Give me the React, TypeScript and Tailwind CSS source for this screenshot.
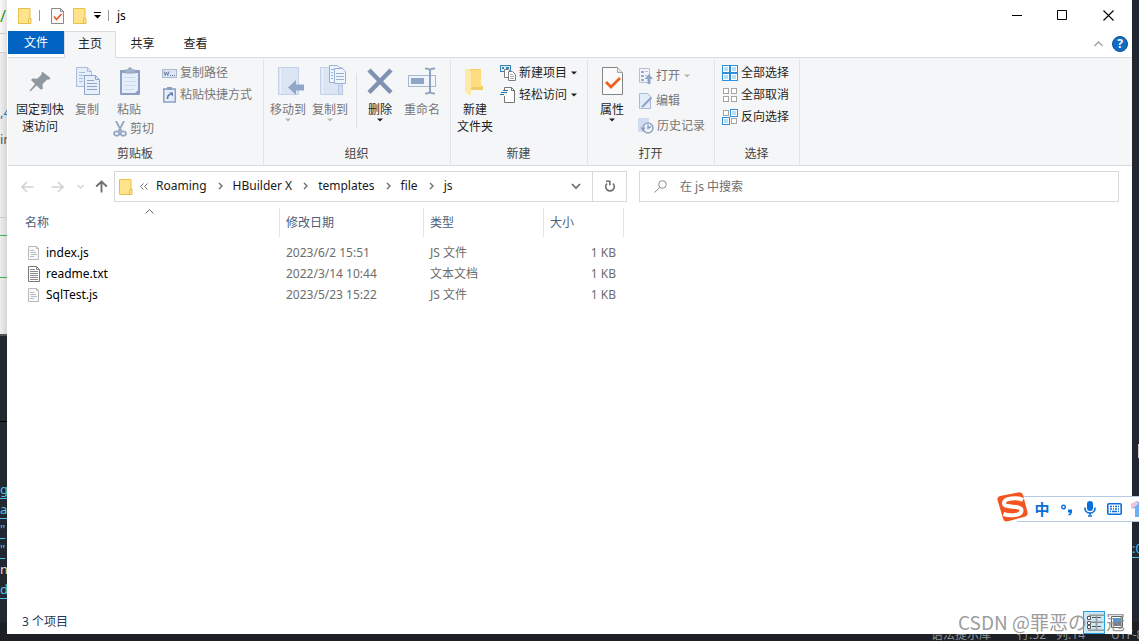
import React, { useState } from 'react';

interface IconProps {
  className?: string;
}

/* Icons */

const FolderIcon: React.FC<IconProps> = ({ className = '' }) => (
  <svg className={className} width="14" height="18" viewBox="0 0 14 18">
    <path d="M.5 1.500h11.500v10h1v5H.5z" fill="#ffe48c" stroke="#e8bf4a" />
    <path d="M10.500 16.500v-4.500l1.500-1" fill="none" stroke="#e8bf4a" />
  </svg>
);

const CheckDocIcon: React.FC<IconProps> = ({ className = '' }) => (
  <svg className={className} width="13" height="18" viewBox="0 0 13 18">
    <path d="M.5 1.500h9l3 3v12H.5z" fill="#fafafa" stroke="#8a8a8a" />
    <path d="M9.500 1.500v3h3" fill="none" stroke="#8a8a8a" />
    <path d="M3 9.500l2.500 3 5-5.500" fill="none" stroke="#f05a24" strokeWidth="1.800" />
  </svg>
);

const Caret: React.FC<IconProps> = ({ className = '' }) => (
  <svg className={className} width="6" height="4" viewBox="0 0 6 4">
    <path d="M0 .5h6l-3 3z" fill="currentColor" />
  </svg>
);

const PinIcon = () => (
  <svg width="32" height="32" viewBox="0 0 32 32">
    <path
      d="M18 6.500l8.500 6.500-1 1.500-2.500.200-4.500 4.500.300 4.500-1.800 1-4.500-4.200L7 26l-1.500.500.500-1.500 5-6-4-4 1.500-1.500 4.800.300 4-4z"
      fill="#8f989e"
    />
  </svg>
);

const CopyIcon = () => (
  <svg width="32" height="32" viewBox="0 0 32 32" fill="none" stroke="#a9bcdb">
    <path d="M5.500 2.500h11l4 4v15h-15z" fill="#e6eefa" />
    <path d="M16.500 2.500v4h4M8 7.500h6M8 10.500h6M8 13.500h4M8 16.500h4" />
    <path d="M13.500 10.500h11l4 4v15h-15z" fill="#e6eefa" stroke="#8fa5c9" />
    <path d="M24.500 10.500v4h4M16 15.500h7M16 18.500h10M16 21.500h10M16 24.500h10" stroke="#8fa5c9" />
  </svg>
);

const PasteIcon = () => (
  <svg width="32" height="32" viewBox="0 0 32 32" fill="none">
    <rect x="7" y="5" width="20" height="25" rx="1" fill="#8ba0c4" />
    <path d="M9 8h16v17l-3 3H9z" fill="#e6eefb" />
    <path d="M11 12.500h12M11 16.500h12M11 20.500h12M11 24.500h10" stroke="#cfdcf0" />
    <path d="M12 8V5h3c0-3 4-3 4 0h3v3z" fill="#a7b4cc" stroke="#93a5c2" />
  </svg>
);

const CutIcon = () => (
  <svg width="14" height="16" viewBox="0 0 14 16" fill="none" stroke="#94a7c5" strokeWidth="1.800">
    <path d="M3 0l5.500 10.500M11 0L5.500 10.500" />
    <ellipse cx="3.700" cy="12.500" rx="2.600" ry="2.200" />
    <ellipse cx="10.300" cy="12.500" rx="2.600" ry="2.200" />
  </svg>
);

const PathIcon = () => (
  <svg width="15" height="16" viewBox="0 0 15 16" fill="none">
    <rect x=".5" y="4.500" width="14" height="8" fill="#dce6f5" stroke="#a9b9d2" />
    <path d="M2 6.500l1.200 4L4.500 7l1.200 3.500L7 6.500" stroke="#5f7393" strokeWidth=".9" />
    <path d="M8 10.500h1M10 10.500h1M12 10.500h1" stroke="#5f7393" />
  </svg>
);

const ShortcutIcon = () => (
  <svg width="15" height="16" viewBox="0 0 15 16" fill="none">
    <rect x="1.800" y="2" width="11.500" height="13" fill="#e6eefb" stroke="#8ba0c4" strokeWidth="1.500" />
    <path d="M5 0h5v3H5z" fill="#8ba0c4" />
    <path d="M5.500 12c0-3 1-4.500 3-4.500" stroke="#5c78aa" strokeWidth="1.600" />
    <path d="M7 5.500h4v4z" fill="#5c78aa" />
  </svg>
);

const MoveToIcon = () => (
  <svg width="32" height="32" viewBox="0 0 32 32">
    <path d="M6.500 2.500h20v27h-20z" fill="#dbe5f4" stroke="#c3d2ea" />
    <path d="M8.500 3v26" stroke="#edf3fb" />
    <path d="M16 22.500l8-7.500v4.500h8v6h-8V30z" fill="#92a6c8" />
  </svg>
);

const CopyToIcon = () => (
  <svg width="32" height="32" viewBox="0 0 32 32" fill="none">
    <path d="M6.500 2.500h22v27h-22z" fill="#dbe5f4" stroke="#c3d2ea" />
    <path d="M8.500 3v26" stroke="#edf3fb" />
    <path d="M24.500 20.500h4v9h-4z" fill="#d3dff0" stroke="#b8c9e3" />
    <path d="M15.500.500h8l3 3v14h-11z" fill="#eff5fd" stroke="#9bb0d2" />
    <path d="M20.500 3.500h8l3 3v12h-11z" fill="#eff5fd" stroke="#9bb0d2" />
    <path d="M17 4.500h3M17 7.500h2M17 10.500h2M17 13.500h2M22 8.500h8M22 11.500h8M22 14.500h8" stroke="#9bb0d2" />
  </svg>
);

const DeleteIcon = () => (
  <svg width="32" height="32" viewBox="0 0 32 32">
    <path d="M5 5l22 22.500M27 5L5 27.500" stroke="#8092b3" strokeWidth="4.500" />
  </svg>
);

const RenameIcon = () => (
  <svg width="32" height="32" viewBox="0 0 32 32" fill="none">
    <rect x="2.500" y="10.500" width="27" height="11" fill="#f0f5fc" stroke="#a4b7d5" />
    <rect x="5" y="13" width="13" height="6" fill="#8fa5c8" />
    <path d="M19 3.500c3 0 5 0 5 3 0-3 2-3 5-3M24 5v22M19 28.500c3 0 5 0 5-3 0 3 2 3 5 3" stroke="#8fa2bf" strokeWidth="2" />
  </svg>
);

const NewFolderIcon = () => (
  <svg width="32" height="32" viewBox="0 0 32 32">
    <path d="M11 4h11v17h2v4H11z" fill="#f2ce66" />
    <path d="M12 5h10v17H12z" fill="#ffdc80" />
    <path d="M6 4h5l1 3v24l-6-4z" fill="#ffe9a8" />
  </svg>
);

const NewItemIcon = () => (
  <svg width="16" height="16" viewBox="0 0 16 16" fill="none">
    <rect x=".5" y=".5" width="10" height="6" fill="#d8eefb" stroke="#3b84b0" />
    <path d="M2 2h2v2H2zM6 2h3v2H6z" fill="#3b84b0" />
    <path d="M4.500 4.500h4l2 2v6h-6z" fill="#fff" stroke="#7c7c7c" />
    <path d="M8.500 6.500h4l3 3v6h-7z" fill="#fff" stroke="#7c7c7c" />
    <path d="M10 9.500h3M10 11.500h4M10 13.500h4" stroke="#aaa" />
  </svg>
);

const EasyAccessIcon = () => (
  <svg width="16" height="16" viewBox="0 0 16 16" fill="none">
    <path d="M4.500.500h7l3 3v12h-10z" fill="#fff" stroke="#777" />
    <path d="M11.500.500v3h3" stroke="#777" />
    <path d="M2 3h5v6H0z" fill="#f5f6f7" />
    <path d="M3 3.500h5M1 5.500h6M0 7.500h4" stroke="#1f74a8" />
  </svg>
);

const PropertiesIcon = () => (
  <svg width="32" height="32" viewBox="0 0 32 32" fill="none">
    <path d="M6.500 2.500h15l5 5v22h-20z" fill="#fbfbfb" stroke="#858585" />
    <path d="M21.500 2.500v5h5" fill="#e4e4e4" stroke="#a5a5a5" />
    <path d="M10 17l5 5 9-9" stroke="#f1601e" strokeWidth="2.800" />
  </svg>
);

const OpenIcon = () => (
  <svg width="15" height="16" viewBox="0 0 15 16" fill="none">
    <path d="M1.500.500h10v14h-10z" fill="#f1f5fb" stroke="#b3c0d6" />
    <path d="M3 3h3v2H3zM3 7h3v2H3zM3 11h3v2H3z" fill="#97a9c8" />
    <path d="M7 3.500h3M7 7.500h2" stroke="#b3c0d6" />
    <path d="M6.500 11L11 6l4 5h-2.500v5h-3v-5z" fill="#8fa3c6" />
  </svg>
);

const EditIcon = () => (
  <svg width="15" height="16" viewBox="0 0 15 16" fill="none">
    <path d="M1.500.500h8l3 3v12h-11z" fill="#e3ecf9" stroke="#a9bad6" />
    <path d="M4 14l9.500-9.500" stroke="#8fa5c8" strokeWidth="2.200" />
  </svg>
);

const HistoryIcon = () => (
  <svg width="16" height="16" viewBox="0 0 16 16" fill="none">
    <path d="M0 0h11v14H0z" fill="#cfdcf1" />
    <circle cx="10" cy="10" r="5" fill="#eef3fa" stroke="#90a4c4" strokeWidth="1.500" />
    <path d="M10 6.500v4l3-2M3 9.500l2 2.500 2-2.500" stroke="#7d91b4" strokeWidth="1.200" />
  </svg>
);

const TileIcon: React.FC<{ filled: boolean[] }> = ({ filled }) => {
  const spots = [
    [0, 0],
    [8, 0],
    [0, 8],
    [8, 8]
  ];
  return (
    <svg width="16" height="16" viewBox="0 0 16 16">
      {spots.map(([x, y], i) =>
        filled[i] ? (
          <g key={i}>
            <rect x={x + 0.5} y={y + 0.5} width="7" height="7" fill="#fff" stroke="#2f8fdb" />
            <rect x={x + 2} y={y + 2} width="4" height="4" fill="#b5dffa" />
          </g>
        ) : (
          <rect key={i} x={x + 1.5} y={y + 1.5} width="5" height="5" fill="#fff" stroke="#a5a5a5" />
        )
      )}
    </svg>
  );
};

const JsFileIcon = () => (
  <svg width="12" height="16" viewBox="0 0 12 16" fill="none">
    <path d="M.5 1.500h8l2 2v11H.5z" fill="#fafafa" stroke="#b9b9b9" />
    <path d="M8.500 1.500v2h2" stroke="#b9b9b9" />
    <path d="M2 5.500h4M2 7.500h6M3 9.500h6M2 11.500h4" stroke="#b5bcc4" />
  </svg>
);

const TxtFileIcon = () => (
  <svg width="12" height="16" viewBox="0 0 12 16" fill="none">
    <path d="M.5.500h8l3 3v12H.5z" fill="#fff" stroke="#777" />
    <path d="M8.500.500v3h3M2 3.500h5M2 5.500h8M2 7.500h8M2 9.500h8M2 11.500h8M2 13.500h8" stroke="#8a8a8a" />
  </svg>
);

const CrumbArrow = () => (
  <svg width="5" height="8" viewBox="0 0 5 8" fill="none">
    <path d="M1 1l3 3-3 3" stroke="#6f6f6f" strokeWidth="1.400" />
  </svg>
);

/* Ribbon parts */

interface BigButtonProps {
  icon: React.ReactNode;
  lines: string[];
  width?: string;
  disabled?: boolean;
  caret?: boolean;
}

const BigButton: React.FC<BigButtonProps> = ({ icon, lines, width = 'w-[42px]', disabled, caret }) => (
  <button
    disabled={disabled}
    className={`${width} ${disabled ? 'text-[#777777]' : 'text-[#1e1e1e]'} flex shrink-0 flex-col items-center whitespace-nowrap pt-[3px]`}
  >
    {icon}
    <span className="mt-[4px] flex flex-col leading-[17px]">
      {lines.map((line) => (
        <span key={line}>{line}</span>
      ))}
    </span>
    {caret && <Caret className={disabled ? 'text-[#b5b5b5]' : ''} />}
  </button>
);

interface SmallButtonProps {
  icon: React.ReactNode;
  label: string;
  height?: string;
  disabled?: boolean;
  caret?: boolean;
}

const SmallButton: React.FC<SmallButtonProps> = ({ icon, label, height = 'h-[22px]', disabled, caret }) => (
  <button
    disabled={disabled}
    className={`${height} ${disabled ? 'text-[#777777]' : 'text-[#1e1e1e]'} flex shrink-0 items-center gap-[3px] whitespace-nowrap`}
  >
    {icon}
    {label}
    {caret && <Caret className={disabled ? 'ml-px text-[#b5b5b5]' : 'ml-px'} />}
  </button>
);

const RibbonGroup: React.FC<{ label: string; width: string; children: React.ReactNode }> = ({
  label,
  width,
  children
}) => (
  <section className={`${width} mb-px mt-[2px] flex shrink-0 flex-col border-r border-[#e2e3e4]`}>
    <div className="flex flex-1 pt-[2px]">{children}</div>
    <h2 className="h-[21px] pr-px text-center leading-[21px] text-[#444444]">{label}</h2>
  </section>
);

const files = [
  { name: 'index.js', date: '2023/6/2 15:51', type: 'JS 文件', size: '1 KB', icon: <JsFileIcon /> },
  { name: 'readme.txt', date: '2022/3/14 10:44', type: '文本文档', size: '1 KB', icon: <TxtFileIcon /> },
  { name: 'SqlTest.js', date: '2023/5/23 15:22', type: 'JS 文件', size: '1 KB', icon: <JsFileIcon /> }
];

const columns = [
  { label: '名称', width: 'w-[272px]', pad: 'pl-[17px]' },
  { label: '修改日期', width: 'w-[144px]', pad: 'pl-[6px]' },
  { label: '类型', width: 'w-[120px]', pad: 'pl-[6px]' },
  { label: '大小', width: 'w-[80px]', pad: 'pl-[6px]' }
];

const crumbs = ['Roaming', 'HBuilder X', 'templates', 'file', 'js'];

const codeLines = ['g', 'a', '"', '"', 'n', 'd'];

/* Code editor behind the window */
const EditorBackdrop = () => (
  <div className="absolute inset-0 flex flex-col overflow-hidden bg-[#23272f] font-['Noto_Sans','Noto_Sans_CJK_SC',sans-serif] text-[13px]">
    <div className="flex flex-1">
      <div className="flex w-[7px] flex-col overflow-hidden whitespace-nowrap">
        <div className="h-[34px] border-b border-[#cccccc] bg-gradient-to-r from-[#f8f8f8] to-[#e2e2e2] pt-[6px] text-[16px] leading-5 text-[#22a020]">/</div>
        <div className="h-[19px] border-b border-[#cccccc] bg-gradient-to-r from-[#f8f8f8] to-[#e2e2e2]" />
        <div className="h-[165px] border-b border-[#cccccc] bg-gradient-to-r from-[#eeeeee] to-[#d6d6d6] pt-[46px] leading-[27px]">
          <div className="text-[#1c75a8]">,4</div>
          <div className="text-[#555555]">in</div>
        </div>
        <div className="h-[18px] border-b border-[#3fae55] bg-gradient-to-r from-[#eeeeee] to-[#d6d6d6]" />
        <div className="h-[42px] border-b border-[#3fae55] bg-gradient-to-r from-[#eeeeee] to-[#d6d6d6]" />
        <div className="h-[58px] border-b-2 border-[#555555] bg-gradient-to-r from-[#eeeeee] to-[#d6d6d6]" />
        <div className="h-[86px] border-b border-black" />
        <div className="pt-[57px] leading-5">
          {codeLines.map((line, i) => (
            <div key={i} className={line === 'n' ? 'text-[#dddddd]' : 'text-[#4cc3ee] underline underline-offset-4'}>
              {line}
            </div>
          ))}
        </div>
      </div>
      <div className="ml-auto w-[7px] overflow-hidden whitespace-nowrap pt-[444px]">
        <div className="ml-[6px] h-[14px] w-px bg-[#d0d0d0]" />
        <div className="mt-[80px] leading-5 text-[#4cc3ee] underline underline-offset-4">:0</div>
      </div>
    </div>
    <div className="flex h-[19px] shrink-0 justify-end bg-[#1c2025] text-[12px] leading-[25px] text-[#8c929b]">
      <span className="mr-[26px]">语法提示库</span>
      <span className="mr-[10px]">行:52</span>
      <span className="mr-[26px]">列:14</span>
      <span className="w-[28px] overflow-hidden whitespace-nowrap">UTF-8</span>
    </div>
  </div>
);

const TitleBar = () => (
  <header className="flex h-[31px] items-center pl-[10px]">
    <FolderIcon />
    <span className="ml-[7px] h-[11px] w-px bg-[#999999]" />
    <button aria-label="属性" className="ml-[11px]">
      <CheckDocIcon />
    </button>
    <button aria-label="新建文件夹" className="ml-[9px]">
      <FolderIcon />
    </button>
    <button aria-label="自定义快速访问工具栏" className="ml-[7px]">
      <svg width="7" height="7" viewBox="0 0 7 7">
        <path d="M0 0h7v1H0zM0 3h7L3.500 6.500z" />
      </svg>
    </button>
    <span className="ml-[7px] h-[11px] w-px bg-[#999999]" />
    <h1 className="ml-[8px] text-black">js</h1>
    <div className="ml-auto mr-px flex self-stretch">
      <button aria-label="最小化" className="grid w-[46px] place-items-center">
        <svg width="11" height="11">
          <path d="M0 5.500h10" stroke="#000" />
        </svg>
      </button>
      <button aria-label="最大化" className="grid w-[45px] place-items-center">
        <svg width="11" height="11">
          <path d="M.5.500h9v9h-9z" fill="none" stroke="#000" />
        </svg>
      </button>
      <button aria-label="关闭" className="grid w-[46px] place-items-center">
        <svg width="11" height="11">
          <path d="M.5.500l10 10M10.500.500l-10 10" stroke="#000" strokeWidth="1.100" />
        </svg>
      </button>
    </div>
  </header>
);

const TabStrip = () => (
  <nav className="flex h-[27px] items-start border-b border-[#dadbdc] text-[#222222]">
    <button className="h-[23px] w-[56px] bg-[#0164c3] text-white">文件</button>
    <button className="h-[27px] w-[52px] border border-b-0 border-[#dadbdc] bg-[#f5f6f7] pb-[2px]">主页</button>
    <button className="h-[25px] w-[53px]">共享</button>
    <button className="h-[25px] w-[53px]">查看</button>
    <div className="ml-auto mr-[4px] flex h-[25px] items-center gap-[9px]">
      <button aria-label="最小化功能区">
        <svg width="9" height="6" viewBox="0 0 9 6" fill="none">
          <path d="M.5 5l4-4 4 4" stroke="#a0a0a0" strokeWidth="1.400" />
        </svg>
      </button>
      <button aria-label="帮助" className="grid size-4 place-items-center rounded-full border border-[#0b4f93] bg-[#0f6cc4] text-[12px] leading-none font-bold text-white">
        ?
      </button>
    </div>
  </nav>
);

const Ribbon = () => (
  <div className="flex h-[108px] overflow-hidden border-b border-[#dadbdc] bg-[#f5f6f7]">
    <RibbonGroup label="剪贴板" width="w-[256px]">
      <div className="flex pl-[4px]">
        <BigButton icon={<PinIcon />} lines={['固定到快', '速访问']} width="w-[56px]" />
        <BigButton icon={<CopyIcon />} lines={['复制']} width="w-[38px]" disabled />
        <div className="flex w-[56px] flex-col pl-[2px]">
          <BigButton icon={<PasteIcon />} lines={['粘贴']} disabled />
          <div className="pl-[5px]">
            <SmallButton icon={<CutIcon />} label="剪切" disabled />
          </div>
        </div>
        <div className="flex flex-col items-start">
          <SmallButton icon={<PathIcon />} label="复制路径" disabled />
          <SmallButton icon={<ShortcutIcon />} label="粘贴快捷方式" disabled />
        </div>
      </div>
    </RibbonGroup>
    <RibbonGroup label="组织" width="w-[187px]">
      <div className="flex items-start pl-[3px]">
        <BigButton icon={<MoveToIcon />} lines={['移动到']} disabled caret />
        <BigButton icon={<CopyToIcon />} lines={['复制到']} disabled caret />
        <span className="ml-[5px] mr-[2px] mt-[11px] h-[55px] w-px bg-[#dedfe0]" />
        <BigButton icon={<DeleteIcon />} lines={['删除']} caret />
        <BigButton icon={<RenameIcon />} lines={['重命名']} disabled />
      </div>
    </RibbonGroup>
    <RibbonGroup label="新建" width="w-[137px]">
      <div className="flex pl-[3px]">
        <BigButton icon={<NewFolderIcon />} lines={['新建', '文件夹']} />
        <div className="flex flex-col items-start pl-[4px]">
          <SmallButton icon={<NewItemIcon />} label="新建项目" caret />
          <SmallButton icon={<EasyAccessIcon />} label="轻松访问" caret />
        </div>
      </div>
    </RibbonGroup>
    <RibbonGroup label="打开" width="w-[127px]">
      <div className="flex items-start pl-[3px]">
        <BigButton icon={<PropertiesIcon />} lines={['属性']} caret />
        <div className="flex flex-col items-start pl-[5px] pt-px">
          <SmallButton icon={<OpenIcon />} label="打开" height="h-[25px]" disabled caret />
          <SmallButton icon={<EditIcon />} label="编辑" height="h-[25px]" disabled />
          <SmallButton icon={<HistoryIcon />} label="历史记录" height="h-[25px]" disabled />
        </div>
      </div>
    </RibbonGroup>
    <RibbonGroup label="选择" width="w-[85px]">
      <div className="flex flex-col items-start pl-[7px]">
        <SmallButton icon={<TileIcon filled={[true, true, true, true]} />} label="全部选择" />
        <SmallButton icon={<TileIcon filled={[false, false, false, false]} />} label="全部取消" />
        <SmallButton icon={<TileIcon filled={[false, true, true, false]} />} label="反向选择" />
      </div>
    </RibbonGroup>
  </div>
);

const AddressRow = () => {
  const [query, setQuery] = useState('');

  return (
    <div className="flex h-[42px] items-start pl-[14px] pr-[13px] pt-[5px]">
      <div className="flex h-[31px] items-center">
        <button aria-label="后退" disabled>
          <svg width="13" height="12" viewBox="0 0 13 12" fill="none" stroke="#d2d2d2" strokeWidth="1.600">
            <path d="M12.500 6H1.500M6 1L1 6l5 5" />
          </svg>
        </button>
        <button aria-label="前进" disabled className="ml-[17px]">
          <svg width="13" height="12" viewBox="0 0 13 12" fill="none" stroke="#d2d2d2" strokeWidth="1.600">
            <path d="M.5 6h11M7 1l5 5-5 5" />
          </svg>
        </button>
        <button aria-label="最近浏览的位置" disabled className="ml-[13px]">
          <svg width="7" height="5" viewBox="0 0 7 5" fill="none" stroke="#d2d2d2" strokeWidth="1.300">
            <path d="M.5 1l3 3 3-3" />
          </svg>
        </button>
        <button aria-label="上移" className="ml-[11px]">
          <svg width="13" height="13" viewBox="0 0 13 13" fill="none" stroke="#707070" strokeWidth="1.900">
            <path d="M6.500 12.500V1.500M1.200 6.500l5.300-5 5.300 5" />
          </svg>
        </button>
      </div>
      <div className="ml-[6px] flex h-[31px] w-[513px] shrink-0 border border-[#d9d9d9]">
        <div className="flex flex-1 items-center pl-[4px] text-[#1a1a1a]">
          <FolderIcon />
          <svg className="ml-[7px]" width="8" height="7" viewBox="0 0 8 7" fill="none" stroke="#6f6f6f">
            <path d="M3.500.500l-3 3 3 3M7.500.500l-3 3 3 3" />
          </svg>
          <ol className="ml-[8px] flex items-center gap-[11px] pb-px">
            {crumbs.map((crumb, i) => (
              <li key={crumb} className="flex items-center gap-[10px]">
                {i > 0 && <CrumbArrow />}
                <a href="#">{crumb}</a>
              </li>
            ))}
          </ol>
          <button aria-label="以前的位置" className="ml-auto mr-[11px]">
            <svg width="10" height="7" viewBox="0 0 10 7" fill="none">
              <path d="M1 1l4 4 4-4" stroke="#666666" strokeWidth="1.600" />
            </svg>
          </button>
        </div>
        <button aria-label="刷新" className="grid w-[34px] place-items-center border-l border-[#d9d9d9]">
          <svg width="12" height="13" viewBox="0 0 12 13" fill="none" stroke="#6f6f6f" strokeWidth="1.600">
            <path d="M3 3.500a4.300 4.300 0 1 0 6 0" />
            <path d="M2 1.300h3.800v3.900" />
          </svg>
        </button>
      </div>
      <label className="ml-[12px] flex h-[31px] min-w-0 flex-1 items-center border border-[#d9d9d9] pl-[14px]">
        <svg width="13" height="13" viewBox="0 0 13 13" fill="none" stroke="#8a8a8a">
          <circle cx="8.500" cy="4.500" r="3.800" />
          <path d="M5.800 7.300L.5 12.500" />
        </svg>
        <input
          aria-label="搜索"
          placeholder="在 js 中搜索"
          value={query}
          onChange={(e) => setQuery(e.target.value)}
          className="ml-[13px] min-w-0 flex-1 outline-none placeholder:text-[#6d6d6d]"
        />
      </label>
    </div>
  );
};

const FileList = () => (
  <div className="relative flex-1 pl-px">
    <svg className="absolute left-[138px] top-px" width="9" height="5" viewBox="0 0 9 5" fill="none">
      <path d="M.5 4.500l4-4 4 4" stroke="#6a6a6a" />
    </svg>
    <table className="w-[616px] table-fixed border-collapse text-left">
      <thead>
        <tr>
          {columns.map((column) => (
            <th key={column.label} className={`${column.width} p-0 pb-[5px] font-normal text-[#4c607a]`}>
              <div className={`${column.pad} h-[29px] border-r border-[#e5e5e5] leading-[29px]`}>{column.label}</div>
            </th>
          ))}
        </tr>
      </thead>
      <tbody className="text-[#6d6d6d]">
        {files.map((file) => (
          <tr key={file.name} className="h-[21px]">
            <td className="p-0 pl-[20px] text-black">
              <span className="flex items-center gap-[6px]">
                {file.icon}
                {file.name}
              </span>
            </td>
            <td className="p-0 pl-[6px]">{file.date}</td>
            <td className="p-0 pl-[6px]">{file.type}</td>
            <td className="p-0 pr-[8px] text-right">{file.size}</td>
          </tr>
        ))}
      </tbody>
    </table>
  </div>
);

const StatusBar = () => (
  <footer className="flex h-[24px] items-center pl-[15px] pr-[4px] text-[#1e395b]">
    <span>3 个项目</span>
    <div className="ml-auto flex">
      <button aria-label="详细信息" className="grid h-[23px] w-[22px] place-items-center border border-[#26a0da] bg-[#cbe8f6]">
        <svg width="15" height="13" viewBox="0 0 15 13" fill="none" stroke="#555555">
          <path d="M.5.500h3v3h-3zM.5 5.500h3v3h-3zM.5 9.500h3v3h-3z" fill="#fff" />
          <path d="M5 1.500h4M5 6.500h4M5 10.500h4M10 1.500h4M10 6.500h4M10 10.500h4" />
        </svg>
      </button>
      <button aria-label="大缩略图" className="grid h-[23px] w-[23px] place-items-center">
        <svg width="12" height="12" viewBox="0 0 12 12">
          <path d="M.5.500h11v11H.5z" fill="#fff" stroke="#666" />
          <path d="M2 2h8v4H2z" fill="#4c9ae6" />
          <path d="M2 6h8v4H2z" fill="#6e7f93" />
        </svg>
      </button>
    </div>
  </footer>
);

/* Floating input method toolbar */
const ImeBar = () => (
  <div className="absolute right-0 top-[492px] flex h-[30px] w-[142px] items-center overflow-hidden text-[#0a6fd8]">
    <div className="absolute inset-x-0 bottom-0 left-[20px] top-[4px] border-y border-[#b4cbe5] bg-white" />
    <svg className="relative shrink-0" width="32" height="30" viewBox="0 0 32 30" fill="none">
      <path d="M3 4L21 .5q4-.8 5 2.500l4.500 17q.8 3-2 4.500L12 29q-5 1.500-6-2.500L.5 8Q-.3 5 3 4z" fill="#f2551f" />
      <path d="M26 8C21 5 6.500 6 7 11.500c.5 5 17 1.500 17.500 6.500.5 5.500-11 6.500-18 4" stroke="#fff" strokeWidth="4" />
    </svg>
    <div className="relative flex items-center pt-[4px]">
      <button className="ml-[5px] w-[16px] text-[15px] leading-[24px] font-bold">中</button>
      <button aria-label="标点" className="ml-[11px]">
        <svg width="12" height="13" viewBox="0 0 12 13" fill="none">
          <circle cx="2.500" cy="4" r="1.800" stroke="currentColor" strokeWidth="1.400" />
          <path d="M7 6.500h4v3q-.5 2.500-3.500 3v-1.500q1.500-.5 1.500-1.500H7z" fill="currentColor" />
        </svg>
      </button>
      <button aria-label="语音" className="ml-[11px]">
        <svg width="12" height="16" viewBox="0 0 12 16" fill="none">
          <rect x="3" y="0" width="6" height="10" rx="3" fill="currentColor" />
          <path d="M1 6.500v1a5 4.500 0 0 0 10 0v-1M6 12v2M4 15h4" stroke="currentColor" strokeWidth="1.600" />
        </svg>
      </button>
      <button aria-label="软键盘" className="ml-[11px]">
        <svg width="15" height="12" viewBox="0 0 15 12" fill="none">
          <rect x=".8" y=".8" width="13.400" height="10.400" rx="1" fill="#fff" stroke="currentColor" strokeWidth="1.600" />
          <path d="M3 3.500h2M6 3.500h1M8 3.500h2M11 3.500h1M3 6h2M6 6h1M8 6h2M11 6h1M3 8.500h1M5 8.500h5M11 8.500h1" stroke="currentColor" strokeWidth="1.500" />
        </svg>
      </button>
      <button aria-label="皮肤" className="ml-[9px] w-[9px] overflow-hidden">
        <svg width="18" height="16" viewBox="0 0 18 16">
          <path d="M0 3l6-3 3 2 3-2 6 3-2 5-2-1v9H4V7L1 8z" fill="#6fb0ee" />
          <path d="M0 3l6-3 1 3-6 5z" fill="#f5c3dc" />
        </svg>
      </button>
    </div>
  </div>
);

const App: React.FC = () => (
  <div className="relative flex min-h-screen flex-col font-['Noto_Sans','Noto_Sans_CJK_SC',sans-serif] text-[12px]">
    <EditorBackdrop />
    <main className="relative mx-[7px] mb-[7px] flex flex-1 flex-col bg-white">
      <div className="pl-px">
        <TitleBar />
        <TabStrip />
        <Ribbon />
      </div>
      <AddressRow />
      <FileList />
      <StatusBar />
    </main>
    <ImeBar />
    <p className="pointer-events-none absolute bottom-[5px] right-[14px] font-['Noto_Sans_CJK_SC',sans-serif] text-[19px] leading-[28px] text-[#8f8f8f]/90">
      CSDN @罪恶の王冠
    </p>
  </div>
);

export default App;
